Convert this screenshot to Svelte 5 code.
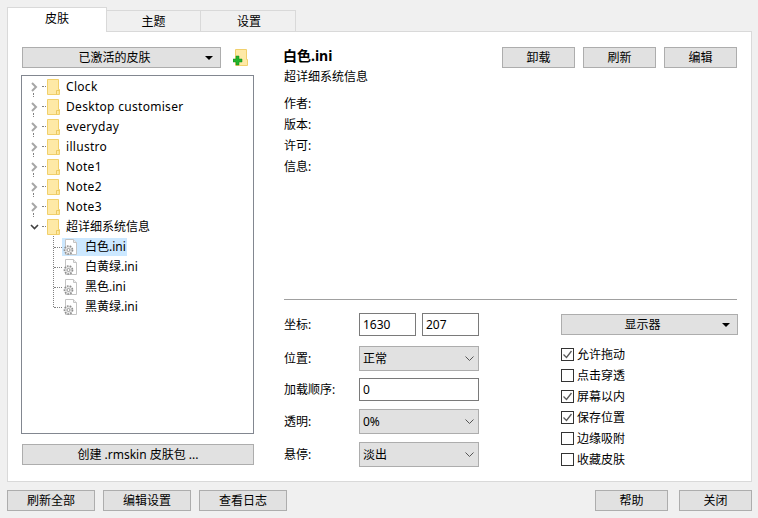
<script>
  const skins = ['Clock', 'Desktop customiser', 'everyday', 'illustro', 'Note1', 'Note2', 'Note3'];
  const files = [
    { name: '白色.ini', selected: true },
    { name: '白黄绿.ini' },
    { name: '黑色.ini' },
    { name: '黑黄绿.ini' }
  ];
  const meta = ['作者:', '版本:', '许可:', '信息:'];
  const checks = [
    { label: '允许拖动', on: true },
    { label: '点击穿透', on: false },
    { label: '屏幕以内', on: true },
    { label: '保存位置', on: true },
    { label: '边缘吸附', on: false },
    { label: '收藏皮肤', on: false }
  ];
</script>

{#snippet folder()}
  <svg class="folder" width="13" height="16" viewBox="0 0 13 16">
    <path d="M.5.5h11v10h1v5H.5z" fill="#fde48f" stroke="#f1d06c"/>
    <path d="M1 1h10v14H1z" fill="#fee9a6"/>
    <path d="M9.5 15.5v-4h3" fill="none" stroke="#edc95e"/>
  </svg>
{/snippet}

{#snippet fileIcon()}
  <svg class="file" width="16" height="18" viewBox="0 0 16 18">
    <path d="M3.5 1.5h8l3 3v12h-11z" fill="#fff" stroke="#c4c4c4"/>
    <path d="M11.5 1.5v3h3" fill="#eee" stroke="#c4c4c4"/>
    <circle cx="6.5" cy="12" r="4" fill="#e6e6e6" stroke="#8f8f8f" stroke-width="1.7" stroke-dasharray="1.6 1.2"/>
    <circle cx="6.5" cy="12" r="1.5" fill="#fff" stroke="#9a9a9a"/>
  </svg>
{/snippet}

{#snippet caret()}
  <svg class="caret" width="8" height="4" viewBox="0 0 8 4"><path d="M0 0h8L4 4z" fill="#000"/></svg>
{/snippet}

{#snippet combo(text)}
  <div class="combo">
    <span>{text}</span>
    <svg width="9" height="5" viewBox="0 0 9 5"><path d="M.5.5l4 4 4-4" fill="none" stroke="#555"/></svg>
  </div>
{/snippet}

<div class="window">
  <div class="tabs">
    <div class="tab active">皮肤</div>
    <div class="tab t2">主题</div>
    <div class="tab t3">设置</div>
  </div>

  <div class="panel">
    <section class="left">
      <div class="activeRow">
        <button class="btn activeBtn"><span>已激活的皮肤</span>{@render caret()}</button>
        <svg class="add" width="15" height="18" viewBox="0 0 15 18">
          <path d="M2.5.5h11v10h1v6h-12z" fill="#fee9a6" stroke="#f1d06c"/>
          <path d="M3 7h3v3h3v3H6v3H3v-3H0v-3h3z" fill="#22b32c" stroke="#138a1b" stroke-width=".5"/>
        </svg>
      </div>

      <div class="tree">
        {#each skins as s, i}
          <div class="row">
            <svg class="chev" width="7" height="10" viewBox="0 0 7 10"><path d="M1 1l4 4-4 4" fill="none" stroke="#a6a6a6" stroke-width="2"/></svg>
            <i class="dots"></i>
            {@render folder()}
            <span class="latin">{s}</span>
            <i class="vdots"></i>
          </div>
        {/each}
        <div class="row">
          <svg class="chev down" width="9" height="6" viewBox="0 0 9 6"><path d="M1 1l3.5 3.5L8 1" fill="none" stroke="#404040" stroke-width="1.6"/></svg>
          <i class="dots"></i>
          {@render folder()}
          <span>超详细系统信息</span>
        </div>
        <div class="children">
          {#each files as f}
            <div class="child">
              <i class="hdots"></i>
              <div class="item" class:selected={f.selected}>
                {@render fileIcon()}
                <span>{f.name}</span>
              </div>
            </div>
          {/each}
        </div>
      </div>

      <button class="btn createBtn">创建 .rmskin 皮肤包 ...</button>
    </section>

    <section class="right">
      <div class="head">
        <div class="titles">
          <div class="title">白色.ini</div>
          <div class="sub">超详细系统信息</div>
        </div>
        <div class="actions">
          <button class="btn act">卸载</button>
          <button class="btn act">刷新</button>
          <button class="btn act">编辑</button>
        </div>
      </div>
      <div class="meta">
        {#each meta as m}<div>{m}</div>{/each}
      </div>

      <hr />

      <div class="settings">
        <div class="form">
          <div class="field f1">
            <label>坐标:</label>
            <div class="coords"><div class="input small">1630</div><div class="input small">207</div></div>
          </div>
          <div class="field f2"><label>位置:</label>{@render combo('正常')}</div>
          <div class="field f3"><label>加载顺序:</label><div class="input wide">0</div></div>
          <div class="field f4"><label>透明:</label>{@render combo('0%')}</div>
          <div class="field f4"><label>悬停:</label>{@render combo('淡出')}</div>
        </div>
        <div class="options">
          <button class="btn monitor"><span>显示器</span>{@render caret()}</button>
          <div class="checks">
            {#each checks as c}
              <div class="check">
                <span class="box">
                  {#if c.on}
                    <svg width="11" height="11" viewBox="0 0 11 11"><path d="M1.5 5.5l3 3 5-6.5" fill="none" stroke="#5a5a5a" stroke-width="1.3"/></svg>
                  {/if}
                </span>
                <span>{c.label}</span>
              </div>
            {/each}
          </div>
        </div>
      </div>
    </section>
  </div>

  <div class="footer">
    <div class="group">
      <button class="btn foot">刷新全部</button>
      <button class="btn foot">编辑设置</button>
      <button class="btn foot">查看日志</button>
    </div>
    <div class="group g2">
      <button class="btn foot2">帮助</button>
      <button class="btn foot2">关闭</button>
    </div>
  </div>
</div>

<style>
  :global(body) { margin: 0; background: #f0f0f0; }
  .window {
    width: 758px; height: 518px; box-sizing: border-box; padding: 7px 6px 0 7px;
    background: #f0f0f0; color: #000; overflow: hidden;
    font-family: "Noto Sans", "Noto Sans CJK SC", sans-serif; font-size: 12px; line-height: 16px;
  }
  .tabs { display: flex; align-items: flex-end; height: 24px; position: relative; z-index: 1; }
  .tab {
    height: 21px; box-sizing: border-box; border: 1px solid #d9d9d9; border-left: 0; border-bottom: 0;
    display: flex; align-items: center; justify-content: center; width: 94px; padding-top: 2px;
  }
  .tab.t3 { width: 95px; padding-left: 2px; }
  .tab.active {
    width: 100px; height: 25px; background: #fff; border-left: 1px solid #d9d9d9;
    margin-bottom: -1px; padding-top: 0; padding-bottom: 3px;
  }
  .panel {
    height: 451px; box-sizing: border-box; background: #fff; border: 1px solid #d9d9d9;
    display: flex; padding: 15px 13px 0 13px; gap: 30px;
  }
  .left { width: 233px; flex: none; display: flex; flex-direction: column; }
  .right { flex: 1; display: flex; flex-direction: column; min-width: 0; }
  .btn {
    font: inherit; color: #000; background: #e1e1e1; border: 1px solid #adadad; padding: 0;
    height: 21px; box-sizing: border-box; display: flex; align-items: center; justify-content: center;
    position: relative;
  }
  .caret { position: absolute; right: 7px; top: 8px; }
  .activeRow { display: flex; align-items: flex-start; height: 28px; padding-left: 1px; }
  .activeBtn { width: 199px; padding-right: 14px; }
  .add { margin: 2px 0 0 12px; }
  .tree {
    height: 359px; box-sizing: border-box; border: 1px solid #828790; padding-top: 1px; overflow: hidden;
  }
  .row { height: 20px; display: flex; align-items: center; position: relative; }
  .chev { position: absolute; left: 9px; top: 5px; }
  .chev.down { left: 8px; top: 7px; }
  .dots { position: absolute; left: 20px; top: 9px; width: 4px; border-top: 1px dotted #808080; }
  .vdots { position: absolute; left: 11px; top: 16px; height: 4px; border-left: 1px dotted #808080; }
  .folder { margin-left: 25px; flex: none; }
  .row span { margin-left: 6px; white-space: nowrap; }
  .latin { letter-spacing: .3px; }
  .children { position: relative; margin-left: 31px; }
  .children::before {
    content: ""; position: absolute; left: 0; top: -1px; height: 71px; border-left: 1px dotted #808080;
  }
  .child { height: 20px; display: flex; align-items: center; position: relative; padding-left: 9px; }
  .hdots { position: absolute; left: 1px; top: 10px; width: 8px; border-top: 1px dotted #808080; }
  .item { display: flex; align-items: center; height: 18px; padding-right: 1px; }
  .item.selected { background: #cce8ff; }
  .file { flex: none; margin-right: 7px; }
  .createBtn { width: 232px; margin: 10px 0 0 1px; }

  .head { display: flex; justify-content: space-between; padding-right: 1px; }
  .title { font-size: 14px; font-weight: 700; line-height: 18px; margin-left: -1px; }
  .sub { margin-top: 4px; }
  .actions { display: flex; gap: 8px; }
  .act { width: 73px; }
  .meta { margin-top: 8px; height: 206px; flex: none; }
  .meta div { height: 21px; line-height: 21px; }
  hr { border: 0; border-top: 1px solid #a0a0a0; margin: 0; width: 453px; }
  .settings { display: flex; justify-content: space-between; padding-top: 13px; width: 454px; }
  .form { display: flex; flex-direction: column; width: 195px; }
  .field { display: flex; align-items: center; }
  .field label { width: 75px; flex: none; }
  .f2 { margin-top: 10px; }
  .f3 { margin-top: 7px; }
  .f4 { margin-top: 8px; }
  .coords { display: flex; gap: 6px; }
  .input {
    height: 23px; box-sizing: border-box; border: 1px solid #7a7a7a; background: #fff;
    padding-left: 3px; line-height: 21px; font-size: 12px;
  }
  .input.small { width: 57px; }
  .input.wide { width: 120px; }
  .combo {
    width: 120px; height: 25px; box-sizing: border-box; border: 1px solid #adadad; background: #e1e1e1;
    display: flex; align-items: center; justify-content: space-between; padding: 0 4px 0 3px;
  }
  .options { width: 177px; }
  .monitor { width: 177px; margin-top: 1px; padding-right: 14px; }
  .checks { margin-top: 9px; }
  .check { height: 21px; display: flex; align-items: center; gap: 3px; }
  .box {
    width: 13px; height: 13px; box-sizing: border-box; border: 1px solid #333; background: #fff;
    display: flex; align-items: center; justify-content: center; flex: none;
  }
  .footer { display: flex; justify-content: space-between; padding-top: 8px; }
  .group { display: flex; gap: 8px; }
  .g2 { gap: 11px; }
  .foot { width: 88px; }
  .foot2 { width: 73px; }
</style>
